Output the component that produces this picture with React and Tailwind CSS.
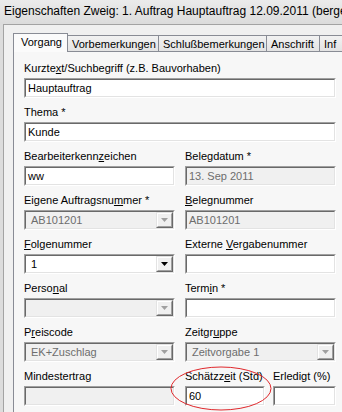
import React from "react";

const font = { fontFamily: '"Liberation Sans", Arial, sans-serif' };

function Arrow({ disabled }) {
  return (
    <div className="w-[17px] h-full border-t border-l border-[#e3e3e3] border-b-[#696969] border-r-[#696969] border-b border-r">
      <div className="h-full w-full flex items-center justify-center bg-[#f0f0f0] border-t border-l border-white border-b border-r border-b-[#a0a0a0] border-r-[#a0a0a0]">
        <svg width="7" height="4" viewBox="0 0 7 4">
          <polygon points="0,0 7,0 3.5,4" fill={disabled ? "#a0a0a0" : "#000"} />
        </svg>
      </div>
    </div>
  );
}

function Box({ value, disabled, combo, className = "" }) {
  return (
    <div className={"h-[20px] border-t border-l border-[#a0a0a0] border-b border-r border-b-white border-r-white " + className}>
      <div
        className={
          "h-full flex border-t border-l border-[#696969] border-b border-r border-b-[#e3e3e3] border-r-[#e3e3e3] " +
          (disabled ? "bg-[#f0f0f0] text-[#6d6d6d]" : "bg-white text-black")
        }
      >
        <div className={"flex-1 flex items-center text-[11px] leading-none " + (combo ? "pl-[5px]" : "pl-[2px]")}>
          {value}
        </div>
        {combo && <Arrow disabled={disabled} />}
      </div>
    </div>
  );
}

function Field({ label, children, className = "" }) {
  return (
    <div className={"flex flex-col " + className}>
      <div className="h-[16px] leading-[16px] text-[11px] text-black mb-[2px] whitespace-nowrap">{label}</div>
      {children}
    </div>
  );
}

const tabs = [
  { t: "Vorbemerkungen", w: "w-[91px]" },
  { t: "Schlußbemerkungen", w: "w-[108px]" },
  { t: "Anschrift", w: "w-[53px]" },
  { t: "Inf", w: "w-[60px]" },
];

export default function App() {
  return (
    <div style={font} className="relative w-[342px] h-[412px] overflow-hidden bg-[#dcdcdc] flex flex-col">
      {/* title bar */}
      <div className="h-[22px] shrink-0 flex items-center pl-[4px] bg-gradient-to-b from-[#ebebeb] to-[#dddddd] text-[12px] text-black whitespace-nowrap overflow-hidden">
        Eigenschaften Zweig: 1. Auftrag Hauptauftrag 12.09.2011 (bergeweg)
      </div>

      <div className="flex-1 ml-[3px] mt-[2px] border-t border-l border-[#a3a3a3] bg-[#f0f0f0] pl-[9px] pt-[8px] flex flex-col">
        {/* tabs */}
        <div className="flex items-end h-[19px] relative z-10">
          <div className="w-[55px] shrink-0 h-[19px] bg-[#fbfbfb] border-t border-l border-r border-[#898c95] text-[11px] leading-[17px] pl-[7px] whitespace-nowrap">
            Vorgang
          </div>
          {tabs.map((x) => (
            <div
              key={x.t}
              className={x.w + " h-[17px] shrink-0 bg-gradient-to-b from-[#f2f2f2] to-[#e3e3e3] border-t border-r border-b border-[#898c95] text-[11px] leading-[16px] pl-[4px] whitespace-nowrap overflow-hidden"}
            >
              {x.t}
            </div>
          ))}
        </div>

        {/* panel */}
        <div className="flex-1 border-l border-t border-[#898c95] -mt-px bg-[#f7f7f7] pl-[10px] pt-[8px]">
          <div className="w-[312px] grid grid-cols-[151px_151px] gap-x-[10px] gap-y-[6px]">
            <Field className="col-span-2" label={<>Kurzte<u>x</u>t/Suchbegriff (z.B. Bauvorhaben)</>}>
              <Box value="Hauptauftrag" />
            </Field>
            <Field className="col-span-2" label="Thema *">
              <Box value="Kunde" />
            </Field>
            <Field label={<>Bearbeiterkenn<u>z</u>eichen</>}>
              <Box value="ww" />
            </Field>
            <Field label="Belegdatum *">
              <Box value="13. Sep 2011" disabled />
            </Field>
            <Field label={<>Eigene Auftragsnu<u>m</u>mer *</>}>
              <Box value="AB101201" disabled combo />
            </Field>
            <Field label={<><u>B</u>elegnummer</>}>
              <Box value="AB101201" disabled />
            </Field>
            <Field label={<><u>F</u>olgenummer</>}>
              <Box value="1" combo />
            </Field>
            <Field label={<>Externe <u>V</u>ergabenummer</>}>
              <Box value="" />
            </Field>
            <Field label={<>Perso<u>n</u>al</>}>
              <Box value="" disabled combo />
            </Field>
            <Field label={<>Term<u>i</u>n *</>}>
              <Box value="" />
            </Field>
            <Field label={<>P<u>r</u>eiscode</>}>
              <Box value="EK+Zuschlag" disabled combo />
            </Field>
            <Field label={<>Zeitgr<u>u</u>ppe</>}>
              <Box value="Zeitvorgabe 1" disabled combo />
            </Field>
            <Field label="Mindestertrag">
              <Box value="" disabled />
            </Field>
            <div className="flex gap-x-[8px]">
              <Field className="w-[80px]" label={<>Schätzz<u>e</u>it (Std)</>}>
                <Box value="60" />
              </Field>
              <Field className="flex-1" label="Erledigt (%)">
                <Box value="" />
              </Field>
            </div>
          </div>
        </div>
      </div>

      {/* red annotation ellipse */}
      <svg className="absolute left-[170px] top-[366px]" width="102" height="46" viewBox="0 0 102 46">
        <ellipse cx="51" cy="22.5" rx="50" ry="21.5" fill="none" stroke="#e0282c" strokeWidth="1" />
      </svg>
    </div>
  );
}
